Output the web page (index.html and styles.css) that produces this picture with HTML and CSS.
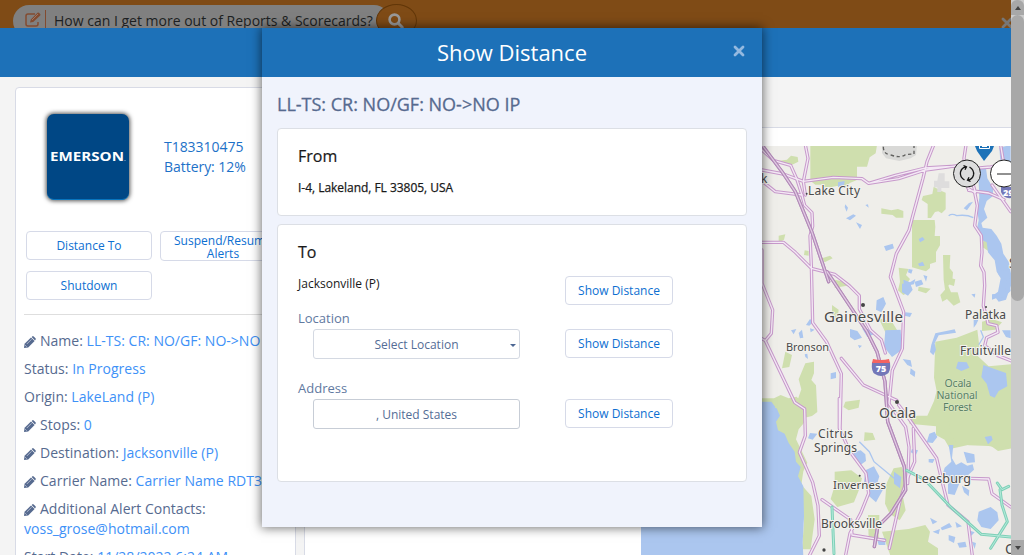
FILE: index.html
```
<!DOCTYPE html>
<html lang="en">
<head>
<meta charset="utf-8">
<title>Show Distance</title>
<link rel="stylesheet" href="styles.css">
</head>
<body>
<svg class="defs" width="0" height="0"><defs>
<symbol id="pencil" viewBox="0 0 12 12"><path d="M0 12l.6-4.200L7 1.400 10.600 5 4.200 11.400z" fill="#566a8f"/><path d="M7.700 .900l.5-.5Q8.900-.2 9.700.5l1.800 1.800q.7.800 0 1.500l-.5.600z" fill="#566a8f"/><path d="M2.800 8l4.700-4.700M1.200 9.200l1.500 1.500" stroke="#d5dae6" stroke-width=".7"/></symbol>
<symbol id="times" viewBox="0 0 12 12"><path d="M2 2l8 8M10 2l-8 8" stroke="currentColor" stroke-width="2.800" stroke-linecap="round"/></symbol>
</defs></svg>
<div class="window">
  <div class="page">
    <header class="promo">
      <div class="search"><svg class="compose" viewBox="0 0 17 15"><path d="M10 2H3Q1 2 1 4v8q0 2 2 2h8q2 0 2-2v-2" fill="none" stroke="#824b30" stroke-width="1.500"/><path d="M5 10.500l.8-3L12.500.8q.7-.7 1.400 0l1.300 1.300q.6.700 0 1.400L8.200 10z" fill="#824b30"/><path d="M7 8l6-6" stroke="#aa8878" stroke-width=".7"/></svg><span class="question">How can I get more out of Reports &amp; Scorecards?</span></div>
      <div class="search-button"><svg viewBox="0 0 16 16"><circle cx="6.500" cy="6.500" r="4.900" fill="none" stroke="#999" stroke-width="2.600"/><path d="M10.200 10.200l4 4" stroke="#999" stroke-width="3" stroke-linecap="round"/></svg></div>
      <svg class="promo-close"><use href="#times"/></svg>
    </header>
    <nav class="navbar"></nav>
    <main class="content">
      <aside class="details">
        <div class="identity">
          <div class="logo"><svg viewBox="0 0 82 86"><text x="3" y="47" textLength="74" lengthAdjust="spacingAndGlyphs">EMERSON</text><circle cx="78" cy="46.500" r=".6" fill="#9fbbd2"/></svg></div>
          <div class="device">T183310475<br>Battery: 12%</div>
        </div>
        <div class="actions">
          <div class="btn">Distance To</div><div class="btn two">Suspend/Resume Alerts</div><div class="btn">Shutdown</div>
        </div>
        <div class="facts">
          <p><svg><use href="#pencil"/></svg>Name: <a>LL-TS: CR: NO/GF: NO-&gt;NO</a></p>
          <p>Status: <a>In Progress</a></p>
          <p>Origin: <a>LakeLand (P)</a></p>
          <p><svg><use href="#pencil"/></svg>Stops: <a>0</a></p>
          <p><svg><use href="#pencil"/></svg>Destination: <a>Jacksonville (P)</a></p>
          <p><svg><use href="#pencil"/></svg>Carrier Name: <a>Carrier Name RDT3</a></p>
          <p><svg><use href="#pencil"/></svg>Additional Alert Contacts:<br><a>voss_grose@hotmail.com</a></p>
          <p>Start Date: <a>11/28/2022 6:24 AM</a></p>
        </div>
      </aside>
      <section class="map-panel">
        <svg class="map" viewBox="641 146 370 409">
          <rect x="641" y="146" width="370" height="409" fill="#efeeea"/>
          <g transform="translate(762 145) scale(.33333)">
            <g fill="#cfdfae">
              <path d="M145 0h200l-4 25-18 12-8 28h-30v40l-20 8-18 14-22-4-20 4h-20v-8h-25l-15-12z"/>
              <path d="M45 48l30-4 12-12 20 4 2 14-20 10-40-4z"/>
              <path d="M358 190l30 6 20-4 16 6v20h-22l-10-8-34-4zM515 125l22 12 14 6v50l-12 12-10-6-10 2-12 18h-10v-42l-18-12 4-12 28-6z"/>
              <path d="M450 225h68l2 20-2 28h16v28l-12 20v30l-18 6v12l-12 10-42-12z"/>
              <path d="M543 330h22l-2 40 10 12-2 25-12 15 8 20 20 0 8 30-20 10-20-20-14 8-6-20 14-16-4-30z"/>
              <path d="M410 368l30 4-8 18 12 12-12 18 12 20-20 10-16-14 6-26z"/>
              <path d="M665 282l22-6 4 24-12 18-18-12zM50 272l20-4-4 16-16 10zM128 316l12 2v14l-14-2zM180 340l24-8 8 8-24 12zM218 404l34 8 4 10-38 6z"/>
              <path d="M520 590l64-12 62-24 6 50-4 30 32 30 68-6v252l-40 8-30-22-60 4-54 12-16-28-26-14v-26l-80-8v-18l24-6h30l20-44 8-30-8-40z"/>
              <path d="M560 820h190v80l-40 8-30-5-60-2-40-12-16-28z"/>
              <path d="M130 655l26-5v35l-8 20 14 16 4 80-16 12-40 10-6-50 14-40-8-30zM70 620l20 10-8 36-22 4z"/>
              <path d="M0 760h36l20-10 24 10 24-5 22 24 4 50-20 24-8 30 34 70-12 26-6 40 30 34 10 70-12 90H120l6-80-10-80-20-110-44-50-24-38-28-30z"/>
              <path d="M250 770l44-6-4 24-30 8-16-10zM308 862l24 2 8 20-34 4zM218 980l50-4 32 24-8 32-16 40-50 14-20-24 12-40zM395 970l24-4 14 40-10 50 8 40-18 30-30-20-14-30 4-60z"/>
              <path d="M318 1110h34l-2 70-30 4zM360 1160l80-8 50-12 14 20-6 30 30 20v30H388zM645 745l40-10 22 14-22 20-30-4zM470 425l36 6-14 14-24-8zM550 395l30 8-4 20-30-10zM660 530l30-8 30 10-20 22-40 4z"/>
              <path d="M765 0h36v16h-36zM350 520l40 10 24 40-16 40-24-40zM210 480l20 14-4 30-16-16z"/>
            </g>
            <g fill="#dedddd"><path d="M360 2h105l-3 28-16 10-34 8-40-8-12-16z" fill="#d9d9d7"/><path d="M530 85h18v24h14v20h-24v12h-12v-14h-10v-20h10z"/></g>
            <path d="M364 5q0 22 20 24 30 12 46 0l26-2V2" fill="none" stroke="#60605e" stroke-width="4" stroke-dasharray="10 8"/>
            <g fill="#abc6ef">
              <path d="M-370 782H14l30 8 10 22-12 18 6 26 20 10 12 28 18 26 4 30 14 16-8 28 16 30 2 90-4 80 2 40H-370z"/>
              <path d="M648 70l24 0 4 30 18 30-2 24-18 14-8 24 10 26-18 16 4 14 26 4 16 20 14 24 6 30 16 24 12 60-12 30-8 24-22 6-8-10-12 4v-10l18-14 8-40-12-20-6-34-20-24-4-30-16-8-14-28 6-30-4-28 6-40z"/>
              <path d="M605 190l16-16 12-4-18 26zM250 178l8 10-4 12-6-14zM252 220l22-12 8 4-18 14zM282 232l18 8-6 12zM366 304l26-8 4 14-24 8zM228 112l20-4-2 14-18 4zM470 282l12-6 6 8-14 8zM468 356l14-6 6 12-16 2zM310 180l8-2 2 10zM440 372l12 2-4 12-10-4zM424 404l20 8 16-10-4 16-30 6zM484 390l12 4-4 16z"/>
              <path d="M420 416l24-2 8 20-14 18-18-10zM344 466l20-10 8 20-14 26-16-8zM370 556l46-2 4 60-30 22-24-30zM264 552l22 6 14 20-22 8-14-10zM300 550l30 4 10 12-24 10zM458 410l20-6 6 14-22 8zM430 502l20 2-6 12-16-4zM628 448l12-2-2 12z"/>
              <path d="M87 556l16-4-8 16zM110 564l10-10 4 24-10 2zM132 540l12-18 10 8-12 12zM144 550l14 4-12 8zM206 685l16-4v18l-16 4zM128 628l8-2 2 16-8-6zM288 600l12 2-8 8zM422 642l24 4 4 20-14-6zM446 670l14 10-2 16-14-10z"/>
              <path d="M520 565l58-12 4 10-52 8-12 24 4 20-8 16-10-10 4-22zM635 520l18-4-10 22-8 10zM664 660l44 16 24 8 4 40-26 14-12 20-14-6-10-36-16-20zM588 650l26 2 8 16-24 10-16-8zM720 556h26v24l-14-4zM690 448l40-4 4-40-24-14v-16l30 4 6 60-20 18-36 4z"/>
              <path d="M276 920l20-4 14 12 2 20-20 14-18-24zM310 976l26-12 16 30-6 20 20 14-24 44-22-20-14-40zM144 864l22 2-14 18-14-4zM396 980l22 16-4 34-18-14zM502 866l16-6 8 16-14 18-18-2zM450 912l18 4-6 14-16-8zM500 942h18l-6 12-12-2zM560 900l14 0-4 40 12 20 16-8 18 10 16-4 4 16-20 18-20 14-18 44-20-4v-44l-16-14 6-20 20-18zM605 920l32 8 2 24-24 2zM650 1100l36-14 20 16 4 24-24 26-28-6-12-20zM668 876l20-4 4 12-14 14zM600 1022l22 14-2 18-14-12zM504 1118l22 12-14 8zM536 1148l26-14 8 12-30 10zM580 1130l20 14-16 4zM512 1160l22-8-4 16zM560 1170l20 6-4 18-16-8zM586 1194l24-4 4 16-22 2zM630 1190l12 4-4 18zM620 1156l18 6-10 10z"/>
              <path d="M712 8l34-8v90l-30-30zM0 770h28l12 16-14 24H0zM344 1180h26v20h-20z"/>
            </g>
            <g fill="none" stroke="#abc6ef" stroke-width="4"><path d="M560 212q10-8 24 0 30-4 50 6M292 890l30 30 14 30 60 50M650 600l14-24-8-20"/></g>
            <g fill="none" stroke-linecap="round" stroke-linejoin="round">
              <g stroke="#c799cb" stroke-width="10">
                <path id="r1" d="M0 15l36 32 50 14 18 40 16 50 8 30 22 22 2 40-8 30 4 90 4 170 42 58 44 95-4 170M0 292h64l36 30 48 48 70 18 44 34 30 30v40l34 64 32 28 12 40"/>
                <path id="r2" d="M0 75l64 12 60 22 90-12 86 4 20 14 80-24 90-22 130-8 24 6M320 115l90-14 80-26 120-16M0 108l40 32 80 10M130 0l8 40-14 70 6 40M515 0l-20 50-12 50-30 110-12 46-38 70-18 70 10 25 30 80-4 110-30 65-10 100 50 70 10 60-4 110M612 0l-6 40 12 90 20 12 8 40-8 60 20 30 2 50-4 40 10 20 2 40-4 60 10 34 4 20 26 6 4 20-34 16-6 24 40 30 52 20M620 136l60 8 46 20"/>
                <path id="r3" d="M0 315v100l32 80-4 70-18 22 88 185 30 20 2 80-18 50 40 90 16 70 4 90-40 80M10 587l-50-30M238 640l66 80 100 46M232 760v90l32 70 48 65 8 60-24 60-32 60-20 100M410 780l30 40 84 120 14 60 20 80 60 50 14 110M454 850l4 100-22 50-20 60-34 150M180 1064l86 60 4 46 98 16M622 1000l58 2 10 44 56 40"/>
                <path id="r4" d="M716 0l10 60-40 6-50 4M690 120l56 80M640 142l-20-72"/>
              </g>
              <g stroke="#f4e9f5" stroke-width="4"><use href="#r1"/><use href="#r2"/><use href="#r3"/><use href="#r4"/></g>
              <path id="m1" stroke="#b38bb9" stroke-width="10" d="M0 0l60 80 40 60 50 122 50 148M195 380l60 90 60 90 30 60 24 90 8 120 50 135 4 70-44 70-40 40-10 60"/>
              <use href="#m1"/><path d="M0 0l60 80 40 60 50 122 50 148M195 380l60 90 60 90 30 60 24 90 8 120 50 135 4 70-44 70-40 40-10 60" stroke="#e3cde5" stroke-width="3.500"/>
              <path stroke="#7fd0b8" stroke-width="9" d="M434 976l54 28 80 84 90 80 88 8M210 1086l6 140M706 1014l14 20 20-10M714 1034l6 46 16 50-50 80"/>
              <path stroke="#b5eadb" stroke-width="3" d="M434 976l54 28 80 84 90 80 88 8M210 1086l6 140M706 1014l14 20 20-10M714 1034l6 46 16 50-50 80"/>
            </g>
            <g fill="#444"><circle cx="303" cy="480" r="6"/><circle cx="405" cy="771" r="6"/><circle cx="186" cy="1215" r="5"/><circle cx="672" cy="486" r="3"/><circle cx="134" cy="146" r="3"/><circle cx="293" cy="992" r="3"/></g>
          </g>
          <g class="place">
            <text x="761" y="183" font-size="12" textLength="5">k</text>
            <text x="808" y="195" font-size="12" textLength="52">Lake City</text>
            <text x="824" y="322" font-size="15" textLength="79">Gainesville</text>
            <text x="965" y="319" font-size="12" textLength="41">Palatka</text>
            <text x="786" y="351" font-size="11" textLength="43">Bronson</text>
            <text x="960" y="355" font-size="12" textLength="51">Fruitville</text>
            <text x="879" y="418" font-size="14" textLength="37">Ocala</text>
            <text x="818" y="438" font-size="12" textLength="35">Citrus</text>
            <text x="814" y="452" font-size="12" textLength="43">Springs</text>
            <text x="833" y="489" font-size="11.500" textLength="53">Inverness</text>
            <text x="915" y="483" font-size="12.500" textLength="56">Leesburg</text>
            <text x="821" y="528" font-size="12" textLength="61">Brooksville</text>
            <text x="1005" y="554" font-size="14">O</text><text x="1009" y="268" font-size="14">S</text>
          </g>
          <g class="forest" text-anchor="middle"><text x="958" y="387" textLength="27">Ocala</text><text x="957" y="399" textLength="41">National</text><text x="957.500" y="411" textLength="29">Forest</text></g>
          <path d="M872 362h18q1 10-3 12-6 4-12 0-4-2-3-12z" fill="#7377b8"/><path d="M873 359q8 2 16 0l1 4h-18z" fill="#f36462"/><text class="shield" x="881" y="372" text-anchor="middle">75</text>
          <path d="M1001 187h14v10q-10 4-14-5z" fill="#7377b8"/><text class="shield" x="1003" y="196">29</text>
          <path d="M975 146h19l-2 5-8 10-7-10z" fill="#1d72b8"/><path d="M979.500 146v2.500h10V146M982 146.500h5" stroke="#fff" fill="none"/>
          <circle cx="967" cy="173.500" r="13.500" fill="#ddd" stroke="#222"/>
          <g fill="none" stroke="#151515" stroke-width="1.300"><path d="M964.500 180q-5-3-4-8 1-4 5-5M969.500 167q5 3 4 8-1 4-5 5M963.500 165.500l3 1.300-1.500 3M970.500 181.500l-3-1.300 1.500-3"/></g>
          <circle cx="1004" cy="173.500" r="13.500" fill="#fff" stroke="#222"/><path d="M997 174h16" stroke="#222"/>
        </svg>
      </section>
    </main>
  </div>
  <div class="scrollbar"><span class="arrow up"></span><span class="thumb"></span><span class="arrow down"></span></div>
  <div class="modal">
    <div class="modal-head"><h1>Show Distance</h1><svg class="modal-close"><use href="#times"/></svg></div>
    <div class="modal-body">
      <h2>LL-TS: CR: NO/GF: NO-&gt;NO IP</h2>
      <div class="card from"><h3>From</h3><p>I-4, Lakeland, FL 33805, USA</p></div>
      <div class="card to">
        <h3>To</h3>
        <div class="row first"><span class="stop">Jacksonville (P)</span><div class="btn">Show Distance</div></div>
        <div class="row"><div class="field"><label>Location</label><div class="input">Select Location<i class="caret"></i></div></div><div class="btn">Show Distance</div></div>
        <div class="row"><div class="field"><label>Address</label><div class="input dark">, United States</div></div><div class="btn">Show Distance</div></div>
      </div>
    </div>
  </div>
</div>
</body>
</html>
```
FILE: styles.css
```
* { box-sizing: border-box; }
body { margin: 0; font-family: "Open Sans", sans-serif; font-size: 14px; color: #566a8f; }
h1, h2, h3, p { margin: 0; }
.defs { display: block; height: 0; }
.window { position: relative; display: flex; width: 1024px; height: 555px; overflow: hidden; }
.page { width: 1011px; height: 555px; display: flex; flex-direction: column; overflow: hidden; }
.promo { position: relative; height: 28px; flex: none; background: #7f4b16; overflow: hidden; }
.search { margin: 5px 0 0 13px; width: 377px; height: 32px; border-radius: 16px; background: #808080; display: flex; padding-left: 12px; }
.compose { width: 17px; height: 15px; margin-top: 7px; flex: none; }
.question { margin: 5px 0 0 3px; padding-left: 8px; border-left: 1px solid #824b30; height: 24px; line-height: 21px; color: #1c1f22; white-space: nowrap; }
.search-button { position: absolute; left: 376px; top: 4px; width: 41px; height: 33px; border: 1px solid #613608; border-radius: 50%; background: #7f4b16; }
.search-button svg { width: 16px; height: 16px; margin: 8px 0 0 11px; display: block; }
.promo-close { position: absolute; left: 1001px; top: 17px; width: 12px; height: 12px; color: #777; }
.navbar { height: 49px; flex: none; background: #1d71b8; }
.content { flex: 1; display: flex; gap: 8px; background: #f4f4f4; padding: 10px 0 0 15px; overflow: hidden; }
.details { width: 281px; flex: none; background: #fff; border: 1px solid #d8dbe6; border-radius: 4px 4px 0 0; padding: 25px 8px 0; height: 500px; }
.identity { display: flex; padding-left: 23px; height: 118px; }
.logo { width: 82px; height: 86px; margin-top: 1px; border-radius: 7px; background: #004785; border-bottom: 1px solid #0874be; box-shadow: 0 0 4px 1px #555; }
.logo svg { display: block; width: 82px; height: 86px; }
.logo text { font: 700 12.500px "Open Sans", sans-serif; fill: #fff; }
.device { margin: 24px 0 0 35px; line-height: 20px; color: #1d71c8; letter-spacing: -.04px; }
.btn { border: 1px solid #d6dae8; border-radius: 4px; background: #fff; color: #0d6fd1; font-size: 12px; height: 29px; line-height: 27px; text-align: center; }
.actions { display: grid; grid-template-columns: 126px 126px; grid-template-rows: 29px 29px; gap: 11px 8px; padding: 0 2px 14px; border-bottom: 1px solid #dedede; height: 84px; }
.actions .two { height: 30px; line-height: 13px; padding-top: 2px; }
.facts { padding-top: 16px; line-height: 20px; white-space: nowrap; letter-spacing: .02px; }
.facts p { margin-bottom: 8px; }
.facts svg { width: 12px; height: 12px; margin-right: 4px; vertical-align: -1.500px; }
.facts a { color: #3e91f7; }
.map-panel { flex: 1; margin-top: 40px; border: solid #d8dbe6; border-width: 1px 0 0 1px; background: #fff; padding: 18px 0 0 336px; }
.map { display: block; width: 370px; height: 409px; }
.place { font-family: "Noto Sans", sans-serif; fill: #4a4a4a; stroke: #f3f2ee; stroke-width: 2px; paint-order: stroke; }
.forest { font: 10.500px "Noto Sans", sans-serif; fill: #588064; stroke: #dce7c8; stroke-width: 1px; paint-order: stroke; }
.shield { font: 800 9px "Open Sans", sans-serif; fill: #fff; }
.scrollbar { width: 13px; height: 555px; background: #cbcbcb; display: flex; flex-direction: column; align-items: center; }
.thumb { width: 13px; height: 286px; background: #a8a8a8; border-radius: 7px; }
.arrow { width: 13px; height: 15px; background: #a8a8a8; display: flex; align-items: center; justify-content: center; }
.arrow::after { content: ""; border: 3px solid transparent; }
.up { border-radius: 6px 6px 0 0; }
.up::after { border-bottom: 4px solid #444; border-top: 0; }
.down { margin-top: auto; }
.down::after { border-top: 4px solid #444; border-bottom: 0; }
.modal { position: absolute; left: 262px; top: 28px; width: 500px; height: 499px; background: #f0f3fc; box-shadow: 0 0 10px 1px rgba(0,0,0,.55); }
.modal-head { display: flex; justify-content: center; height: 49px; background: #1d71b8; color: #fff; position: relative; }
.modal-head h1 { font-size: 22px; font-weight: 400; line-height: 49px; }
.modal-close { position: absolute; left: 471px; top: 17px; width: 12px; height: 12px; color: #94b9e0; }
.modal-body { padding: 14px 15px; display: flex; flex-direction: column; }
.modal-body h2 { font-size: 18px; font-weight: 500; line-height: 27px; margin-bottom: 10px; letter-spacing: 0; white-space: nowrap; -webkit-text-stroke: .3px #566a8f; }
.card { background: #fff; border: 1px solid #dcdfe5; border-radius: 4px; padding: 16px 20px; color: #191919; }
.from { height: 88px; margin-bottom: 8px; }
.from p { font-size: 12px; line-height: 18px; margin-top: 11px; letter-spacing: -.03px; -webkit-text-stroke: .25px #191919; }
.card h3 { font-size: 16px; line-height: 23px; font-weight: 500; -webkit-text-stroke: .2px #191919; }
.to { height: 258px; }
.row { display: flex; justify-content: space-between; align-items: flex-end; width: 375px; height: 70px; }
.row.first { height: 41px; margin-bottom: -16px; }
.row .btn { width: 108px; }
.row .field + .btn { margin-bottom: 1px; }
.stop { font-size: 12px; align-self: flex-start; line-height: 18px; margin-top: 11px; }
.row.first .btn { margin-bottom: 0; }
.field { font-size: 13px; color: #61799f; }
.field label { display: block; line-height: 18px; margin-bottom: 2px; }
.input { position: relative; margin-left: 15px; width: 207px; height: 30px; line-height: 29px; border: 1px solid #d4d9e2; border-radius: 3px; text-align: center; font-size: 12px; color: #546d96; }
.input.dark { border-color: #c7cdd6; }
.caret { position: absolute; right: 3px; top: 14px; border: 3.500px solid transparent; border-top-color: #4d6793; border-bottom: 0; }
```
